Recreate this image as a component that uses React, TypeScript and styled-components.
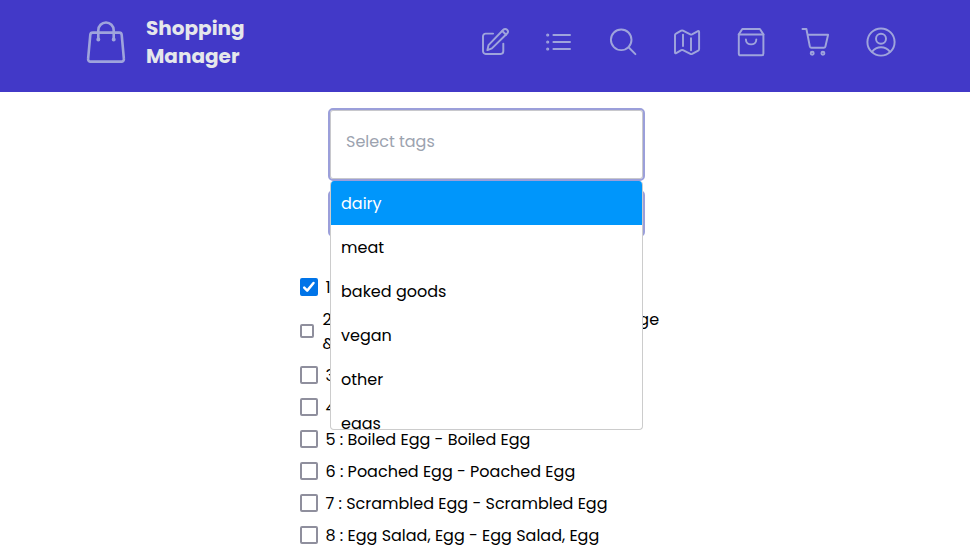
import React from "react";
import styled, { createGlobalStyle } from "styled-components";

const GlobalStyle = createGlobalStyle`
  * { box-sizing: border-box; }
  body {
    margin: 0;
    background: #fff;
    color: #000;
    font: 16px/24px Poppins, Inter, sans-serif;
    height: 551px;
    overflow: hidden;
  }
`;

const Navbar = styled.header`
  height: 92px;
  background: #4239c8;
  color: #9fa4dc;
  display: flex;
  justify-content: space-between;
  padding: 14px 73px 0 86px;
`;

const Brand = styled.div`
  display: flex;
  gap: 20px;
`;

const BrandIcon = styled.svg`
  width: 40px;
  height: 44px;
  margin-top: 6px;
  fill: none;
  stroke: currentColor;
  stroke-width: 2.6;
  stroke-linecap: round;
  stroke-linejoin: round;
`;

const BrandName = styled.div`
  color: #e5e7eb;
  font-size: 20px;
  line-height: 28px;
  font-weight: 700;
`;

const Label = styled.span`
  white-space: nowrap;
  display: block;
`;

const Nav = styled.nav`
  display: flex;
  gap: 32.3px;
  padding-top: 12px;
`;

const NavIcon = styled.svg`
  width: 32px;
  height: 32px;
  fill: none;
  stroke: currentColor;
  stroke-width: 1.95;
  stroke-linecap: round;
  stroke-linejoin: round;
`;

const Main = styled.main`
  width: 372px;
  margin: 0 0 0 300px;
  padding-top: 16px;
`;

const Fields = styled.div`
  width: 317px;
  margin-left: 28px;
  display: flex;
  flex-direction: column;
  gap: 9px;
  position: relative;
`;

const Field = styled.div<{ $height: number }>`
  height: ${(p) => p.$height}px;
  border: 2px solid #9b9fda;
  border-radius: 5px;
  box-shadow: inset 0 0 0 1px #c8c8cc;
  padding: 20px 16px;
  color: #9ca3af;
`;

const Menu = styled.ul`
  position: absolute;
  top: 73px;
  left: 2px;
  width: 313px;
  height: 249px;
  margin: 0;
  padding: 0;
  list-style: none;
  overflow: hidden;
  background: #fff;
  border: 1px solid #ccc;
  border-top: 0;
  border-radius: 4px;
`;

const Option = styled.li<{ $active?: boolean }>`
  height: 44px;
  padding: 11px 10px 9px;
  background: ${(p) => (p.$active ? "#0096fb" : "transparent")};
  color: ${(p) => (p.$active ? "#fff" : "#000")};
`;

const Items = styled.div`
  margin-top: 35px;
`;

const Item = styled.label<{ $tall?: boolean }>`
  display: flex;
  align-items: center;
  gap: ${(p) => (p.$tall ? 8.5 : 7.5)}px;
  min-height: 32px;
  padding: ${(p) => (p.$tall ? 4 : 0)}px 0;
  word-spacing: ${(p) => (p.$tall ? 0.65 : 0)}px;
`;

const Box = styled.span<{ $checked?: boolean; $small?: boolean }>`
  flex: none;
  width: ${(p) => (p.$small ? 14 : 18)}px;
  height: ${(p) => (p.$small ? 14 : 18)}px;
  margin-bottom: 2px;
  border: 2px solid ${(p) => (p.$checked ? "#0074e8" : "#8f8f9d")};
  border-radius: 2px;
  background: ${(p) => (p.$checked ? "#0074e8" : "#fff")};
`;

const Tick = styled.svg`
  display: block;
  width: 14px;
  height: 14px;
  fill: none;
  stroke: #fff;
  stroke-width: 2.5;
  stroke-linecap: round;
  stroke-linejoin: round;
`;

const icons: { name: string; viewBox: string; art: React.ReactNode }[] = [
  {
    name: "Edit",
    viewBox: "-0.6 0.4 32 32",
    art: (
      <>
        <path d="M13.5 8H6a2.6 2.6 0 0 0-2.6 2.6v15.1a2.6 2.6 0 0 0 2.6 2.6h15.1a2.6 2.6 0 0 0 2.6-2.6V18" />
        <path d="M7.8 24.5l1.1-5L23.7 4.2a2.6 2.6 0 0 1 3.8 3.7L12.3 22.8z" />
        <path d="M22.7 5.4l3.8 3.7" />
      </>
    ),
  },
  {
    name: "List",
    viewBox: "0.8 0 32 32",
    art: (
      <>
        <path d="M10.2 9h16.6M10.2 16h16.6M10.2 23h16.6" />
        <g strokeWidth="1.4">
          <circle cx="4.5" cy="9" r="0.9" />
          <circle cx="4.5" cy="16" r="0.9" />
          <circle cx="4.5" cy="23" r="0.9" />
        </g>
      </>
    ),
  },
  {
    name: "Search",
    viewBox: "1 0 32 32",
    art: (
      <>
        <circle cx="14.2" cy="13.8" r="10.3" />
        <path d="M21.6 21.3l6.8 6.8" />
      </>
    ),
  },
  {
    name: "Map",
    viewBox: "1 0 32 32",
    art: (
      <>
        <path d="M4 9.1c0-.7.3-1.2 1-1.5l5.2-2.9c.7-.3 1.2-.3 1.8 0l7.3 3.7c.6.3 1.1.3 1.7 0l5.9-3.3c.7-.3 1.2 0 1.2.8v17.2c0 .7-.3 1.2-.9 1.5l-6 3.3c-.6.3-1.2.3-1.8 0L12 24.2c-.6-.3-1.1-.3-1.7 0l-5.1 3c-.7.3-1.2 0-1.2-.8z" />
        <path d="M12 8.6v11.5M20 12.3v12" />
      </>
    ),
  },
  {
    name: "Bag",
    viewBox: "1 0 32 32",
    art: (
      <>
        <path d="M3.8 8.4h24.6v19a1.9 1.9 0 0 1-1.9 1.9H5.7a1.9 1.9 0 0 1-1.9-1.9z" />
        <path d="M3.8 8.4L7.3 3h17.6l3.5 5.4" />
        <path d="M10.9 13.5c0 6.5 10.4 6.5 10.4 0" />
      </>
    ),
  },
  {
    name: "Cart",
    viewBox: "0.8 0 32 32",
    art: (
      <>
        <path d="M2.3 3h3.9l3.4 17.2c.2.9.8 1.5 1.7 1.5h12.3c.8 0 1.4-.5 1.6-1.3L27.9 8.8H7.4" />
        <circle cx="12" cy="27.3" r="1.5" />
        <circle cx="22.7" cy="27.3" r="1.5" />
      </>
    ),
  },
  {
    name: "Profile",
    viewBox: "0 0 32 32",
    art: (
      <>
        <circle cx="16" cy="16" r="13.6" />
        <circle cx="16" cy="12.7" r="5" />
        <path d="M7 25.8c4.8-6 13.2-6 18 0" />
      </>
    ),
  },
];

const options = ["dairy", "meat", "baked goods", "vegan", "other", "eggs"];

const items: string[][] = [
  ["1 : Fried Egg - Fried Egg"],
  ["2 : Sausage and Egg Sandwich - Sausage", "& Egg Sandwich"],
  ["3 : Omelette - Omelette"],
  ["4 : Egg White - Egg White"],
  ["5 : Boiled Egg - Boiled Egg"],
  ["6 : Poached Egg - Poached Egg"],
  ["7 : Scrambled Egg - Scrambled Egg"],
  ["8 : Egg Salad, Egg - Egg Salad, Egg"],
];

export default function App() {
  return (
    <>
      <GlobalStyle />
      <Navbar>
        <Brand>
          <BrandIcon viewBox="0 0 40 44">
            <path d="M6.8 12.6h26.4a2.5 2.5 0 0 1 2.5 2.3l2.2 24a2.4 2.4 0 0 1-2.4 2.7H4.5a2.4 2.4 0 0 1-2.4-2.7l2.2-24a2.5 2.5 0 0 1 2.5-2.3z" />
            <path d="M12.3 19.5V10.3a7.7 7.8 0 0 1 15.4 0v9.2" />
            <path d="M12.3 19.4v.2M27.7 19.4v.2" strokeWidth="4" />
          </BrandIcon>
          <BrandName>
            <Label>Shopping</Label>
            <Label>Manager</Label>
          </BrandName>
        </Brand>
        <Nav>
          {icons.map((i) => (
            <NavIcon key={i.name} viewBox={i.viewBox} aria-label={i.name}>
              {i.art}
            </NavIcon>
          ))}
        </Nav>
      </Navbar>
      <Main>
        <Fields>
          <Field $height={73}>
            <Label>Select tags</Label>
          </Field>
          <Field $height={47} />
          <Menu>
            {options.map((name, i) => (
              <Option key={name} $active={i === 0}>
                <Label>{name}</Label>
              </Option>
            ))}
          </Menu>
        </Fields>
        <Items>
          {items.map((lines, i) => (
            <Item key={lines[0]} $tall={lines.length > 1}>
              <Box $checked={i === 0} $small={lines.length > 1}>
                {i === 0 && (
                  <Tick viewBox="0 0 14 14">
                    <path d="M2.2 7.6l3 3L11.5 3" />
                  </Tick>
                )}
              </Box>
              <div>
                {lines.map((line) => (
                  <Label key={line}>{line}</Label>
                ))}
              </div>
            </Item>
          ))}
        </Items>
      </Main>
    </>
  );
}
